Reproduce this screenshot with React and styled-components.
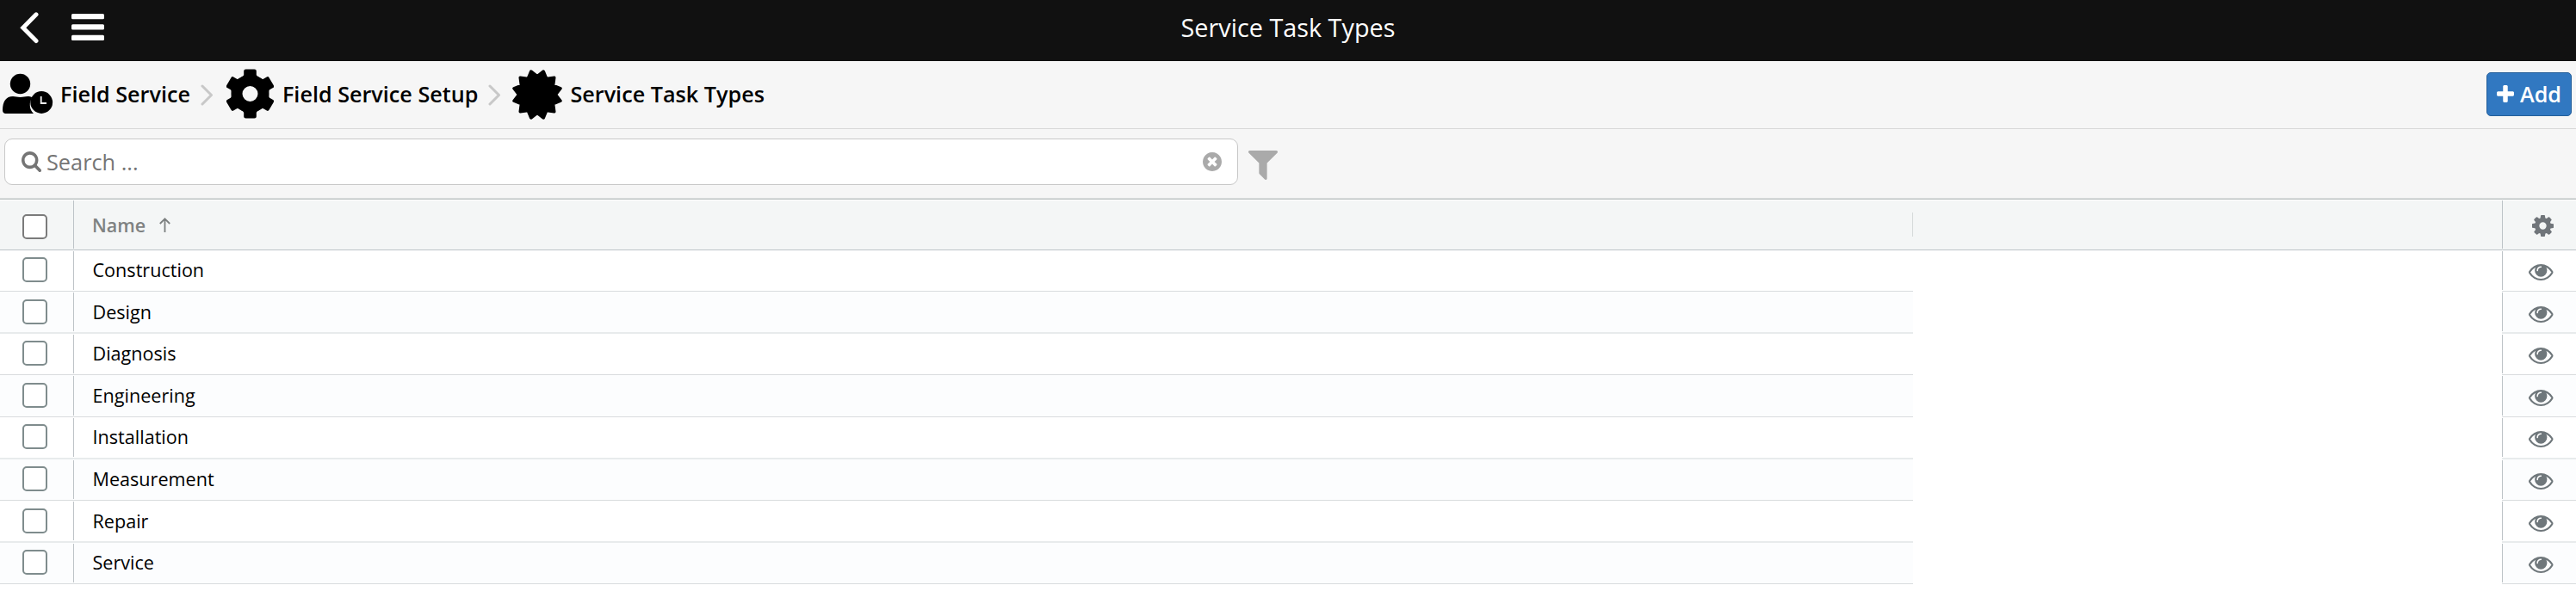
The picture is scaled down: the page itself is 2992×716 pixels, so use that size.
import React from "react";
import styled, { createGlobalStyle } from "styled-components";

const GlobalStyle = createGlobalStyle`
  * { box-sizing: border-box; }
  body { margin: 0; background: #fff; color: #000; font-family: "Open Sans", "Noto Sans", sans-serif; }
  svg { display: block; flex: none; }
`;

const Page = styled.div`
  width: 100%;
  height: 716px;
  display: flex;
  flex-direction: column;
  overflow: hidden;
`;

const TopBar = styled.header`
  height: 71px;
  flex: none;
  background: #111;
  color: #fff;
  display: grid;
  grid-template-columns: 1fr auto 1fr;
`;

const TopActions = styled.div`
  display: flex;
  align-items: flex-start;
  gap: 38px;
  padding: 14px 0 0 23px;
`;

const MenuIcon = styled.svg`
  margin-top: 2px;
`;

const Title = styled.h1`
  margin: 0;
  font-size: 28.8px;
  font-weight: 400;
  line-height: 64px;
`;

const Breadcrumbs = styled.nav`
  height: 79px;
  flex: none;
  background: #f6f6f6;
  border-bottom: 1px solid #d9d9d9;
  display: flex;
  align-items: flex-start;
  padding: 9px 5px 0 2px;
`;

const Crumb = styled.a`
  display: flex;
  align-items: flex-start;
  gap: ${(p) => p.$gap || 10}px;
  height: 60px;
  font-size: 25.2px;
  font-weight: 600;
  white-space: nowrap;
`;

const CrumbIcon = styled.span`
  padding-top: ${(p) => p.$top}px;
`;

const CrumbText = styled.span`
  line-height: 36px;
  padding-top: 11px;
`;

const Chevron = styled.svg`
  margin: 18px ${(p) => p.$after}px 0 12px;
`;

const AddButton = styled.button`
  margin: 4px 0 0 auto;
  width: 99px;
  height: 51px;
  padding: 0 0 2px;
  display: flex;
  align-items: center;
  justify-content: center;
  gap: 7px;
  border: 1px solid #235e9a;
  border-radius: 5px;
  background: #3178c1;
  color: #fff;
  font: 600 25.2px/36px "Open Sans", sans-serif;
`;

const SearchBar = styled.div`
  height: 80px;
  flex: none;
  background: #f6f6f6;
  display: flex;
  align-items: flex-start;
  gap: 12px;
  padding: 11px 0 0 5px;
  color: #aaa;
`;

const SearchField = styled.div`
  width: 1433px;
  height: 54px;
  display: flex;
  align-items: center;
  padding: 0 18px 0 19px;
  background: #fff;
  border: 1px solid #c8c8c8;
  border-radius: 9px;
  color: #757575;
`;

const Placeholder = styled.span`
  flex: 1;
  padding-left: 6px;
  font-size: 25.3px;
  line-height: 36px;
`;

const ClearIcon = styled.span`
  color: #aaa;
`;

const FilterIcon = styled.span`
  margin-top: 14px;
`;

const TableHead = styled.div`
  height: 61px;
  flex: none;
  display: grid;
  grid-template-columns: 86px 2136px 1fr 86px;
  border-top: 1px solid #d9dcdc;
  border-bottom: 1px solid #bdc3c7;
  background: #f4f6f6;
  box-shadow: inset 0 1px #bdc3c3, inset 0 2px #fff;
  padding: 2px 0 1px;
  color: #70757a;
`;

const HeadCheck = styled.div`
  padding: 16px 0 0 26px;
  border-right: 1px solid #bdc3c7;
`;

const HeadName = styled.div`
  display: flex;
  align-items: center;
  justify-content: space-between;
  padding-left: 21px;
`;

const SortLabel = styled.div`
  display: flex;
  align-items: center;
  gap: 16px;
  font-size: 21.5px;
  font-weight: 600;
  line-height: 30px;
  color: #7f8282;
`;

const SortName = styled.span`
  padding-top: 2px;
`;

const ColumnHandle = styled.div`
  width: 1px;
  height: 28px;
  background: #d5dada;
`;

const HeadTools = styled.div`
  border-left: 1px solid #bdc3c7;
  padding: 17px 0 0 34px;
`;

const Checkbox = styled.span`
  display: block;
  width: 29px;
  height: 29px;
  flex: none;
  border: 2px solid ${(p) => (p.$head ? "#7b7b7b" : "#7f8c8d")};
  border-radius: 5px;
  background: #fff;
`;

const Row = styled.div`
  height: ${(p) => p.$height}px;
  flex: none;
  display: grid;
  grid-template-columns: 86px 2136px 1fr 86px;
`;

const Cell = styled.div`
  display: flex;
  align-items: flex-start;
  background-color: ${(p) => (p.$alt ? "#fcfdfe" : "#fff")};
  border-bottom: ${(p) => (p.$soft ? "2px solid #e8ebec" : "1px solid #d9dcde")};
`;

const CheckCell = styled(Cell)`
  padding: ${(p) => p.$top}px 0 0 26px;
  background-image: linear-gradient(#bdc3c7, #bdc3c7);
  background-repeat: no-repeat;
  background-size: 1px calc(100% - 2px);
  background-position: right 0 top 1px;
`;

const NameCell = styled(Cell)`
  padding: ${(p) => p.$top}px 0 0 21.5px;
  font-size: 21.6px;
  line-height: 30px;
`;

const ViewCell = styled(Cell)`
  padding: ${(p) => p.$top + 8}px 0 0 31px;
  color: #6f777b;
  background-image: linear-gradient(#bdc3c7, #bdc3c7);
  background-repeat: no-repeat;
  background-size: 1px calc(100% - 2px);
  background-position: left 0 top 1px;
`;

const PATHS = {
  cog: "M1152 896q0-106-75-181t-181-75-181 75-75 181 75 181 181 75 181-75 75-181zm512-109v222q0 12-8 23t-20 13l-185 28q-19 54-39 91 35 50 107 138 10 12 10 25t-9 23q-27 37-99 108t-94 71q-12 0-26-9l-138-108q-44 23-91 38-16 136-29 186-7 28-36 28h-222q-14 0-24.5-8.5t-11.5-21.5l-28-184q-49-16-90-37l-141 107q-10 9-25 9-14 0-25-11-126-114-165-168-7-10-7-23 0-12 8-23 15-21 51-66.5t54-70.5q-27-50-41-99l-183-27q-13-2-21-12.5t-8-23.5v-222q0-12 8-23t19-13l186-28q14-46 39-92-40-57-107-138-10-12-10-24 0-10 9-23 26-36 98.5-107.5t94.5-71.5q13 0 26 10l138 107q44-23 91-38 16-136 29-186 7-28 36-28h222q14 0 24.5 8.5t11.5 21.5l28 184q49 16 90 37l142-107q9-9 24-9 13 0 25 10 129 119 165 170 7 8 7 22 0 12-8 23-15 21-51 66.5t-54 70.5q26 50 41 98l183 28q13 2 21 12.5t8 23.5z",
  eye: "M1664 960q-152-236-381-353 61 104 61 225 0 185-131.5 316.5t-316.5 131.5-316.5-131.5-131.5-316.5q0-121 61-225-229 117-381 353 133 205 333.5 326.5t434.5 121.5 434.5-121.5 333.5-326.5zm-720-384q0-20-14-34t-34-14q-125 0-214.5 89.5t-89.5 214.5q0 20 14 34t34 14 34-14 14-34q0-86 61-147t147-61q20 0 34-14t14-34zm848 384q0 34-20 69-140 230-376.5 368.5t-499.5 138.5-499.5-139-376.5-368q-20-35-20-69t20-69q140-229 376.5-368t499.5-139 499.5 139 376.5 368q20 35 20 69z",
  search: "M1216 832q0-185-131.5-316.5t-316.5-131.5-316.5 131.5-131.5 316.5 131.5 316.5 316.5 131.5 316.5-131.5 131.5-316.5zm512 832q0 52-38 90t-90 38q-54 0-90-38l-343-342q-179 124-399 124-143 0-273.5-55.5t-225-150-150-225-55.5-273.5 55.5-273.5 150-225 225-150 273.5-55.5 273.5 55.5 225 150 150 225 55.5 273.5q0 220-124 399l343 343q37 37 37 90z",
  filter: "M1595 295q17 41-14 70l-493 493v742q0 42-39 59-13 5-25 5-27 0-45-19l-256-256q-19-19-19-45v-486l-493-493q-31-29-14-70 17-39 59-39h1280q42 0 59 39z",
  clear: "M1277 1122q0-26-19-45l-181-181 181-181q19-19 19-45 0-27-19-46l-90-90q-19-19-46-19-26 0-45 19l-181 181-181-181q-19-19-45-19-27 0-46 19l-90 90q-19 19-19 46 0 26 19 45l181 181-181 181q-19 19-19 45 0 27 19 46l90 90q19 19 46 19 26 0 45-19l181-181 181 181q19 19 45 19 27 0 46-19l90-90q19-19 19-46zm387-226q0 209-103 385.5t-279.5 279.5-385.5 103-385.5-103-279.5-279.5-103-385.5 103-385.5 279.5-279.5 385.5-103 385.5 103 279.5 279.5 103 385.5z",
  plus: "M1600 736v192q0 40-28 68t-68 28h-416v416q0 40-28 68t-68 28h-192q-40 0-68-28t-28-68v-416h-416q-40 0-68-28t-28-68v-192q0-40 28-68t68-28h416v-416q0-40 28-68t68-28h192q40 0 68 28t28 68v416h416q40 0 68 28t28 68z",
};

const Glyph = ({ name, box, width, height }) => (
  <svg width={width} height={height} viewBox={box} fill="currentColor" preserveAspectRatio="none">
    <path d={PATHS[name]} />
  </svg>
);

const UserClock = () => (
  <svg width="60" height="48" viewBox="2 85 60 48">
    <circle cx="23.5" cy="97.5" r="11.7" />
    <path d="M3 128c0-10 4-16 12-16 3 0 5 1 8.500 1s5.500-1 8.500-1c2 0 4 .4 5.500 1.200A14.500 14.500 0 0 0 39 132H6.500c-2 0-3.500-1.500-3.500-4z" />
    <circle cx="48.200" cy="119" r="12.900" />
    <path d="M47.700 112v8h6.300" fill="none" stroke="#f5f5f5" strokeWidth="1.800" />
  </svg>
);

const SetupGear = () => {
  const teeth = [0, 60, 120, 180, 240, 300];
  return (
    <svg width="55" height="58" viewBox="-27.500 -29 55 58">
      <circle r="15.500" fill="none" stroke="#000" strokeWidth="13" />
      {teeth.map((a) => (
        <path key={a} transform={`rotate(${a})`} d="M-10.500 -19Q-7.300 -20.500 -7.300 -22V-26.500Q-7.300 -28.500 -5 -28.500H5Q7.300 -28.500 7.300 -26.500V-22Q7.300 -20.500 10.500 -19L8 -13H-8Z" />
      ))}
    </svg>
  );
};

const Burst = () => {
  const points = Array.from({ length: 24 }, (_, i) => {
    const a = (i * 15 * Math.PI) / 180;
    const r = i % 2 ? 28 : 21.5;
    return `${(r * Math.sin(a)).toFixed(2)},${(-r * Math.cos(a)).toFixed(2)}`;
  }).join(" ");
  return (
    <svg width="58" height="60" viewBox="-29 -30 58 60">
      <polygon points={points} stroke="#000" strokeWidth="3.400" strokeLinejoin="round" />
    </svg>
  );
};

const Separator = ({ after }) => (
  <Chevron $after={after} width="15" height="25" viewBox="0 0 15 25" fill="none" stroke="#c8c8c8" strokeWidth="3" strokeLinecap="round" strokeLinejoin="round">
    <path d="M2 2L12.500 12.500L2 23" />
  </Chevron>
);

// [name, row height, offset of the row's contents, soft lower border]
const ROWS = [
  ["Construction", 48, 8],
  ["Design", 49, 9, true],
  ["Diagnosis", 48, 8],
  ["Engineering", 49, 9],
  ["Installation", 49, 8, true],
  ["Measurement", 48, 8],
  ["Repair", 49, 9, true],
  ["Service", 48, 8],
];

export default function App() {
  return (
    <Page>
      <GlobalStyle />
      <TopBar>
        <TopActions>
          <svg width="22" height="37" viewBox="0 0 22 37" fill="none" stroke="#fff" strokeWidth="5" strokeLinecap="round" strokeLinejoin="miter">
            <path d="M19 2.800L3.800 18.200L19 33.500" />
          </svg>
          <MenuIcon width="38" height="31" viewBox="0 0 38 31" fill="#fff">
            <rect width="38" height="6.300" rx="1.500" />
            <rect y="12.300" width="38" height="6.300" rx="1.500" />
            <rect y="24.700" width="38" height="6.300" rx="1.500" />
          </MenuIcon>
        </TopActions>
        <Title>Service Task Types</Title>
      </TopBar>
      <Breadcrumbs>
        <Crumb $gap={8}>
          <CrumbIcon $top={5}><UserClock /></CrumbIcon>
          <CrumbText>Field Service</CrumbText>
        </Crumb>
        <Separator after={15} />
        <Crumb>
          <CrumbIcon $top={0}><SetupGear /></CrumbIcon>
          <CrumbText>Field Service Setup</CrumbText>
        </Crumb>
        <Separator after={13} />
        <Crumb $gap={9}>
          <CrumbIcon $top={-1}><Burst /></CrumbIcon>
          <CrumbText>Service Task Types</CrumbText>
        </Crumb>
        <AddButton>
          <Glyph name="plus" box="192 128 1408 1408" width={20} height={20} />
          Add
        </AddButton>
      </Breadcrumbs>
      <SearchBar>
        <SearchField>
          <Glyph name="search" box="64 128 1664 1664" width={23} height={24} />
          <Placeholder>Search ...</Placeholder>
          <ClearIcon>
            <Glyph name="clear" box="128 128 1536 1536" width={22} height={22} />
          </ClearIcon>
        </SearchField>
        <FilterIcon>
          <Glyph name="filter" box="192 256 1408 1408" width={34} height={34} />
        </FilterIcon>
      </SearchBar>
      <TableHead>
        <HeadCheck>
          <Checkbox $head />
        </HeadCheck>
        <HeadName>
          <SortLabel>
            <SortName>Name</SortName>
            <svg width="13" height="17" viewBox="0 0 13 17" fill="none" stroke="#7b7f7f" strokeWidth="1.800">
              <path d="M6.500 17V1.500M.8 7L6.500 1.300L12.200 7" />
            </svg>
          </SortLabel>
          <ColumnHandle />
        </HeadName>
        <div />
        <HeadTools>
          <Glyph name="cog" box="128 128 1536 1536" width={25} height={25} />
        </HeadTools>
      </TableHead>
      {ROWS.map(([name, height, top, soft], i) => {
        const look = { $alt: i % 2 === 1, $soft: soft, $top: top };
        return (
          <Row key={name} $height={height}>
            <CheckCell {...look}>
              <Checkbox />
            </CheckCell>
            <NameCell {...look}>{name}</NameCell>
            <div />
            <ViewCell {...look}>
              <Glyph name="eye" box="0 384 1792 1152" width={28.5} height={19} />
            </ViewCell>
          </Row>
        );
      })}
    </Page>
  );
}
